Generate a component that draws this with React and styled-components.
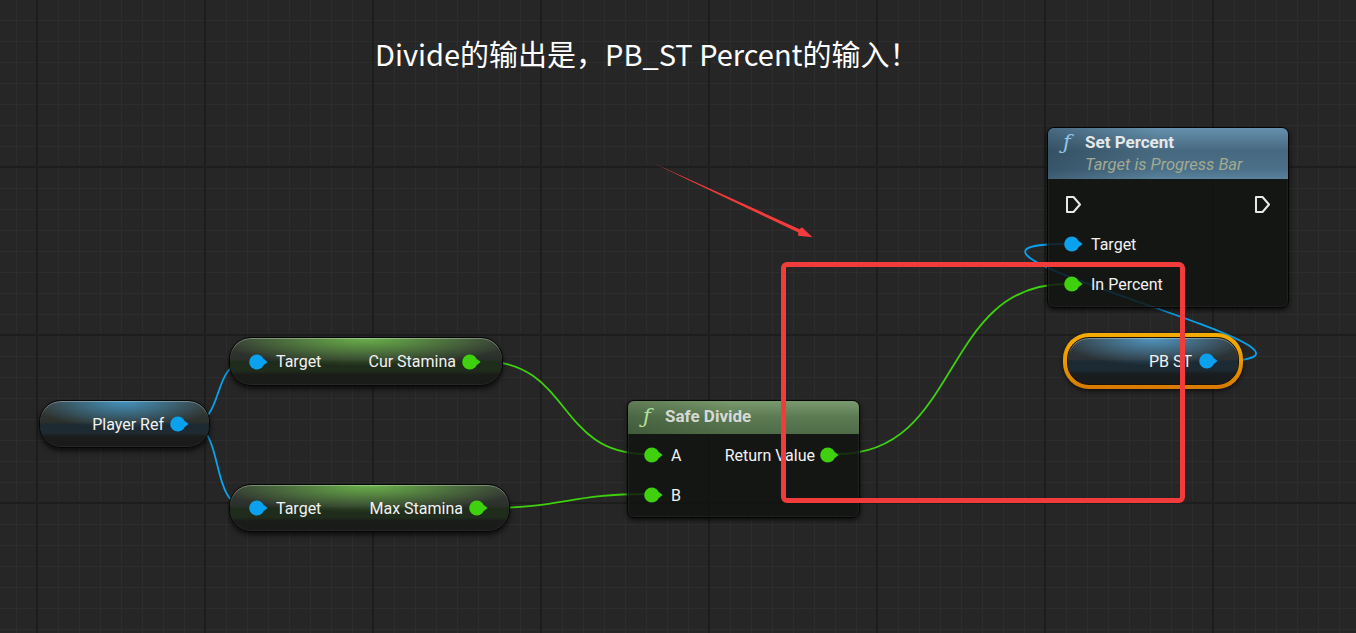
import React from 'react';
import styled, { createGlobalStyle } from 'styled-components';

const BLUE = '#0aa2ee';
const GREEN = '#3fd00e';

const GlobalStyle = createGlobalStyle`
  html, body {
    margin: 0;
    padding: 0;
    background: #262626;
  }
  body {
    font-family: Roboto, "Noto Sans", sans-serif;
  }
`;

const Canvas = styled.div`
  position: relative;
  width: 1356px;
  height: 633px;
  overflow: hidden;
  background-color: #262626;
  background-image:
    linear-gradient(90deg, #1d1d1d 2px, transparent 2px),
    linear-gradient(180deg, #1d1d1d 2px, transparent 2px),
    linear-gradient(90deg, #2d2d2d 1px, transparent 1px),
    linear-gradient(180deg, #2d2d2d 1px, transparent 1px);
  background-size: 168px 168px, 168px 168px, 21px 21px, 21px 21px;
  background-position: 36px 0, 0 166px, 16px 0, 0 20px;
`;

const Note = styled.div`
  position: absolute;
  left: 375px;
  top: 32px;
  color: #ffffff;
  font-family: "Noto Sans CJK SC", "Noto Sans", sans-serif;
  font-size: 29px;
  line-height: 42px;
  white-space: nowrap;
`;

const Wires = styled.svg`
  position: absolute;
  left: 0;
  top: 0;
  pointer-events: none;
`;

const Overlay = styled.svg`
  position: absolute;
  left: 0;
  top: 0;
  pointer-events: none;
`;

const Highlight = styled.div`
  position: absolute;
  left: 781px;
  top: 262px;
  width: 404px;
  height: 241px;
  box-sizing: border-box;
  border: 5px solid #f23b3b;
  border-radius: 6px;
`;

/* ---------- function nodes ---------- */

const Card = styled.div`
  position: absolute;
  left: ${(p) => p.$x}px;
  top: ${(p) => p.$y}px;
  width: ${(p) => p.$w}px;
  height: ${(p) => p.$h}px;
  box-sizing: border-box;
  display: flex;
  flex-direction: column;
  border: 1px solid #050505;
  border-radius: 7px;
  overflow: hidden;
  background: rgba(17, 19, 17, 0.84);
  box-shadow: 0 2px 5px rgba(0, 0, 0, 0.7), inset 0 0 0 1px rgba(255, 255, 255, 0.05);
`;

const Header = styled.div`
  height: ${(p) => p.$h}px;
  flex: none;
  display: flex;
  align-items: flex-start;
  gap: 9px;
  padding: ${(p) => p.$pt}px 0 0 15px;
  box-sizing: border-box;
  background: ${(p) =>
    p.$tone === 'blue'
      ? `linear-gradient(90deg, rgba(20, 34, 46, 0.35), rgba(0, 0, 0, 0) 45%),
         linear-gradient(180deg, #6590ad 0%, #47697f 45%, #4a6f88 80%, #5a829c 100%)`
      : `linear-gradient(90deg, rgba(20, 40, 16, 0.25), rgba(0, 0, 0, 0) 45%),
         linear-gradient(180deg, #7a9a6e 0%, #5b7a52 50%, #4f6c48 100%)`};
`;

const FnGlyph = styled.span`
  width: 13px;
  flex: none;
  font-family: "DejaVu Serif", serif;
  font-style: italic;
  font-size: 21px;
  line-height: 21px;
  color: ${(p) => (p.$tone === 'blue' ? '#8ec6ea' : '#b0e29e')};
`;

const Titles = styled.div`
  display: flex;
  flex-direction: column;
`;

const Title = styled.div`
  font-weight: 700;
  font-size: 17px;
  line-height: 21px;
  color: ${(p) => (p.$tone === 'blue' ? '#e4e8ea' : '#d6d9d4')};
`;

const Subtitle = styled.div`
  font-style: italic;
  font-size: 16.5px;
  line-height: 24px;
  color: #a2aa92;
`;

const Body = styled.div`
  flex: 1;
  display: flex;
  flex-direction: column;
  padding: ${(p) => p.$pt}px 0 0;
`;

const Row = styled.div`
  height: 40px;
  display: flex;
  align-items: center;
  justify-content: space-between;
  padding: 0 ${(p) => p.$pr ?? 17}px 0 ${(p) => p.$pl ?? 17}px;
`;

const Side = styled.div`
  display: flex;
  align-items: center;
  gap: ${(p) => p.$gap ?? 8}px;
`;

const Label = styled.span`
  font-size: 16px;
  line-height: 19px;
  color: #f2f2f2;
  white-space: nowrap;
`;

/* ---------- variable getter pills ---------- */

const Pill = styled.div`
  position: absolute;
  left: ${(p) => p.$x}px;
  top: ${(p) => p.$y}px;
  width: ${(p) => p.$w}px;
  height: ${(p) => p.$h}px;
  box-sizing: border-box;
  display: flex;
  align-items: center;
  justify-content: ${(p) => (p.$end ? 'flex-end' : 'space-between')};
  padding: 0 ${(p) => p.$pr}px 0 19px;
  border: 1px solid #060606;
  border-radius: 22px;
  background:
    radial-gradient(ellipse 55% 60% at 50% 0%, ${(p) => p.$glow}, rgba(0, 0, 0, 0) 100%),
    linear-gradient(180deg, #363b36 0%, #2b2f2b 47%, ${(p) => p.$band} 50%, ${(p) => p.$band} 70%, #1a1c1a 78%, #191a19 100%);
  box-shadow: 0 3px 5px rgba(0, 0, 0, 0.65), inset 0 1px 0 rgba(255, 255, 255, 0.3),
    inset 0 -1px 0 rgba(255, 255, 255, 0.06);
`;

const OrangeRing = styled.div`
  position: absolute;
  left: 1063px;
  top: 333px;
  width: 180px;
  height: 56px;
  box-sizing: border-box;
  padding: 4px;
  border-radius: 26px;
  background: linear-gradient(180deg, #f6ac00 0%, #eb9800 50%, #d67a00 100%);
  box-shadow: 0 2px 5px rgba(0, 0, 0, 0.6);
`;

const RingInner = styled.div`
  height: 100%;
  box-sizing: border-box;
  display: flex;
  align-items: center;
  justify-content: flex-end;
  gap: 7px;
  padding-right: 20px;
  border: 1px solid #1a1206;
  border-radius: 22px;
  background:
    radial-gradient(ellipse 55% 60% at 50% 0%, rgba(84, 160, 206, 0.9), rgba(0, 0, 0, 0) 100%),
    linear-gradient(180deg, #353a3d 0%, #2a3033 47%, #1c2a33 50%, #1c2a33 70%, #1a1d1f 78%, #191b1c 100%);
  box-shadow: inset 0 1px 0 rgba(255, 255, 255, 0.3);
`;

/* ---------- pins ---------- */

const PinSvg = styled.svg`
  flex: none;
  display: block;
`;

const DataPin = ({ color }) => (
  <PinSvg width="19" height="16" viewBox="0 0 19 16">
    <circle cx="7.8" cy="8" r="7.6" fill={color} />
    <path d="M14.6 4.8 L18.6 8 L14.6 11.2 Z" fill={color} />
  </PinSvg>
);

const ExecPin = () => (
  <PinSvg width="17" height="19" viewBox="0 0 17 19">
    <path
      d="M2 2 H8.5 L15 9.5 L8.5 17 H2 Z"
      fill="none"
      stroke="#e8e8e8"
      strokeWidth="2"
      strokeLinejoin="round"
    />
  </PinSvg>
);

const wires = [
  { d: 'M188 424 C 228 424, 208 361, 250 361', color: BLUE },
  { d: 'M188 424 C 228 424, 206 508, 250 508', color: BLUE },
  { d: 'M481 361 C 572 361, 556 454, 646 454', color: GREEN },
  { d: 'M488 508 C 560 508, 572 494, 646 494', color: GREEN },
  { d: 'M838 454 C 962 454, 940 284, 1066 284', color: GREEN },
  { d: 'M1216 361 C 1400 361, 880 244, 1066 244', color: BLUE },
];

export default function App() {
  return (
    <>
      <GlobalStyle />
      <Canvas>
        <Note>Divide的输出是，PB_ST Percent的输入！</Note>

        <Wires width="1356" height="633">
          {wires.map((w, i) => (
            <path key={i} d={w.d} fill="none" stroke={w.color} strokeWidth="1.8" />
          ))}
        </Wires>

        {/* Player Ref getter */}
        <Pill $x={39} $y={400} $w={171} $h={48} $pr={20} $end
          $glow="rgba(70, 156, 204, 0.9)" $band="#1d2a31">
          <Side $gap={6}>
            <Label>Player Ref</Label>
            <DataPin color={BLUE} />
          </Side>
        </Pill>

        {/* Cur Stamina getter */}
        <Pill $x={229} $y={337} $w={274} $h={49} $pr={21}
          $glow="rgba(112, 190, 76, 0.9)" $band="#1f2c1b">
          <Side>
            <DataPin color={BLUE} />
            <Label>Target</Label>
          </Side>
          <Side $gap={6}>
            <Label>Cur Stamina</Label>
            <DataPin color={GREEN} />
          </Side>
        </Pill>

        {/* Max Stamina getter */}
        <Pill $x={229} $y={484} $w={281} $h={48} $pr={21}
          $glow="rgba(112, 190, 76, 0.9)" $band="#1f2c1b">
          <Side>
            <DataPin color={BLUE} />
            <Label>Target</Label>
          </Side>
          <Side $gap={6}>
            <Label>Max Stamina</Label>
            <DataPin color={GREEN} />
          </Side>
        </Pill>

        {/* Safe Divide */}
        <Card $x={627} $y={400} $w={233} $h={118}>
          <Header $h={33} $tone="green" $pt={5}>
            <FnGlyph $tone="green">ƒ</FnGlyph>
            <Title $tone="green">Safe Divide</Title>
          </Header>
          <Body $pt={1}>
            <Row $pl={16} $pr={20}>
              <Side>
                <DataPin color={GREEN} />
                <Label>A</Label>
              </Side>
              <Side $gap={5}>
                <Label>Return Value</Label>
                <DataPin color={GREEN} />
              </Side>
            </Row>
            <Row $pl={16}>
              <Side>
                <DataPin color={GREEN} />
                <Label>B</Label>
              </Side>
            </Row>
          </Body>
        </Card>

        {/* Set Percent */}
        <Card $x={1047} $y={127} $w={242} $h={181}>
          <Header $h={51} $tone="blue" $pt={4}>
            <FnGlyph $tone="blue">ƒ</FnGlyph>
            <Titles>
              <Title $tone="blue">Set Percent</Title>
              <Subtitle>Target is Progress Bar</Subtitle>
            </Titles>
          </Header>
          <Body $pt={5}>
            <Row>
              <ExecPin />
              <ExecPin />
            </Row>
            <Row $pl={16}>
              <Side>
                <DataPin color={BLUE} />
                <Label>Target</Label>
              </Side>
            </Row>
            <Row $pl={16}>
              <Side>
                <DataPin color={GREEN} />
                <Label>In Percent</Label>
              </Side>
            </Row>
          </Body>
        </Card>

        {/* PB ST getter */}
        <OrangeRing>
          <RingInner>
            <Label>PB ST</Label>
            <DataPin color={BLUE} />
          </RingInner>
        </OrangeRing>

        <Highlight />

        <Overlay width="1356" height="633">
          <polygon
            points="653,163 799.6,229.2 801.9,227.2 812.5,237.2 798.1,235.8 798.3,232.6"
            fill="#f23b3b"
          />
        </Overlay>
      </Canvas>
    </>
  );
}
